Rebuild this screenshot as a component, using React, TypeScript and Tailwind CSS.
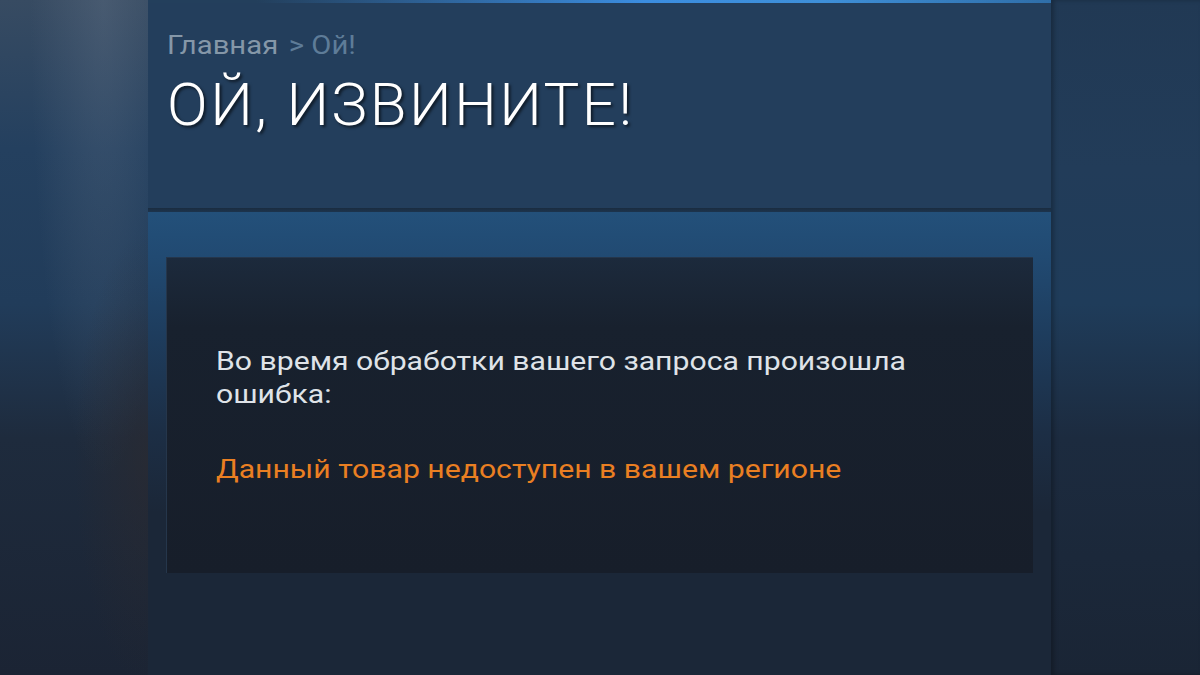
import React from "react";

export default function App() {
  return (
    <div
      className="flex w-[1200px] h-[675px] overflow-hidden bg-[#1b2738]"
      style={{ fontFamily: "Roboto, 'Noto Sans', sans-serif" }}
    >
      {/* left blurred side */}
      <div className="relative w-[148px] shrink-0 h-full bg-[linear-gradient(180deg,#374b62_0%,#24405f_22%,#213c5a_45%,#1e2b3d_65%,#1b2434_100%)]">
        <div className="absolute inset-0 bg-[radial-gradient(ellipse_at_70%_0%,rgba(110,125,145,0.3),transparent_50%)]" />
        <div className="absolute inset-0 bg-[radial-gradient(ellipse_at_100%_68%,rgba(48,42,44,0.5),transparent_35%)]" />
      </div>

      {/* center column */}
      <div className="w-[903px] shrink-0 h-full flex flex-col">
        <div className="h-[3px] bg-[linear-gradient(90deg,#233f5c_0%,#233f5c_12%,#3b8de0_55%,#3e8fd8_75%,#2f6ea8_100%)]" />
        <div className="h-[205px] bg-[#233e5c] pl-[19px] pt-[26px]">
          <div className="flex text-[25px] leading-[34px] origin-left scale-x-[1.17] w-max">
            <span className="text-[#8597a8]">Главная</span>
            <span className="ml-[9px] text-[#5e7c98]">&gt; Ой!</span>
          </div>
          <h1 className="mt-[7px] text-[60px] leading-[70px] font-light text-white tracking-[2.5px] [text-shadow:2px_2px_3px_rgba(0,0,0,0.6)]">
            ОЙ, ИЗВИНИТЕ!
          </h1>
        </div>
        <div className="h-[4px] bg-[linear-gradient(180deg,#1a2c40,#1c344e)]" />
        <div className="flex-1 flex flex-col bg-[linear-gradient(180deg,#23507a_0px,#214a72_45px,#1e3d5e_120px,#1c2e45_220px,#1b2738_300px,#1b2738_100%)]">
          <div className="mx-[18px] mt-[45px] h-[316px] border-t border-l border-[#25364b] bg-[linear-gradient(180deg,#1c2a3c_0%,#18212e_22%,#171e2a_100%)] pl-[49px] pt-[87px] pr-[40px]">
            <div className="origin-left scale-x-[1.16] w-[640px]">
              <p className="text-[26px] leading-[33px] text-[#dfe3e8] w-[600px]">
                Во время обработки вашего запроса произошла ошибка:
              </p>
              <p className="mt-[42px] text-[26px] leading-[33px] text-[#ea7f22] whitespace-nowrap">
                Данный товар недоступен в вашем регионе
              </p>
            </div>
          </div>
        </div>
      </div>

      {/* right blurred side */}
      <div className="relative flex-1 h-full bg-[linear-gradient(180deg,#213954_0%,#223c59_25%,#1f3c5a_45%,#1c2b3f_65%,#1a2535_100%)] shadow-[inset_3px_0_4px_rgba(0,0,0,0.25)]" />
    </div>
  );
}
